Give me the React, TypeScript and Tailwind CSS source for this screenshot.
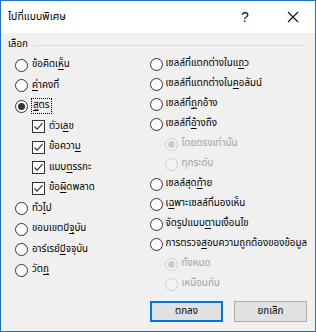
import React from "react";

type Lbl = [string, string, string];

function Radio({ checked = false, disabled = false }: { checked?: boolean; disabled?: boolean }) {
  return (
    <span
      className={
        disabled
          ? "flex w-[13px] h-[13px] shrink-0 items-center justify-center rounded-full border border-[#cccccc] bg-[#f4f4f4]"
          : "flex w-[13px] h-[13px] shrink-0 items-center justify-center rounded-full border border-[#333333] bg-white"
      }
    >
      {checked && (
        <span
          className={
            disabled
              ? "block w-[7px] h-[7px] rounded-full bg-[#cccccc]"
              : "block w-[7px] h-[7px] rounded-full bg-[#333333]"
          }
        />
      )}
    </span>
  );
}

function Check() {
  return (
    <span className="flex w-[13px] h-[13px] shrink-0 items-center justify-center border border-[#333333] bg-white">
      <svg width="11" height="11" viewBox="0 0 11 11">
        <path d="M1.5 5.5 L4.2 8.2 L9.5 2.2" fill="none" stroke="#333333" strokeWidth="1.2" />
      </svg>
    </span>
  );
}

function Label({ l, disabled = false, focus = false }: { l: Lbl; disabled?: boolean; focus?: boolean }) {
  return (
    <span
      className={
        (disabled ? "whitespace-nowrap text-[#a0a0a0] " : "whitespace-nowrap text-black ") +
        (focus ? "outline outline-1 outline-dotted outline-[#000] px-[1px] py-[2px]" : "")
      }
    >
      {l[0]}
      {l[1] && <span className="underline underline-offset-[2px]">{l[1]}</span>}
      {l[2]}
    </span>
  );
}

function LRow({ children }: { children: React.ReactNode }) {
  return <div className="flex h-[20.5px] items-center gap-[4px]">{children}</div>;
}
function RRow({ children, indent = false }: { children: React.ReactNode; indent?: boolean }) {
  return (
    <div className={indent ? "flex h-[20px] items-center gap-[4px] pl-[15px]" : "flex h-[20px] items-center gap-[3px]"}>
      {children}
    </div>
  );
}

export default function App() {
  const font = {
    fontFamily: '"Leelawadee UI", Tahoma, "Noto Sans Thai", "Noto Sans", "DejaVu Sans", sans-serif',
  };
  return (
    <div className="w-[316px] h-[332px] border border-[#1f70c8] flex flex-col text-[9.8px] leading-none" style={font}>
      <div className="h-[32px] bg-white flex items-center pl-[7px] shrink-0">
        <span className="text-black text-[10.5px]">ไปที่แบบพิเศษ</span>
        <span className="ml-auto w-[20px] text-center text-[14px] text-[#111] mr-[32px]" style={{ fontFamily: '"Liberation Sans", sans-serif' }}>?</span>
        <span className="mr-[16px] flex items-center">
          <svg width="12" height="12" viewBox="0 0 12 12">
            <path d="M1 1 L11 11 M11 1 L1 11" stroke="#111" strokeWidth="1.1" />
          </svg>
        </span>
      </div>
      <div className="flex-1 bg-[#f0f0f0] flex flex-col pl-[14px] pr-[8px] pt-[5px] pb-[9px]">
        <div className="flex h-[14px] items-center gap-[6px] -ml-[7px]">
          <span className="text-black">เลือก</span>
          <span className="flex-1 h-px bg-[#dcdcdc]" />
        </div>
        <div className="flex mt-[2px]">
          <div className="w-[137px] flex flex-col pt-[1px]">
            <LRow><Radio /><Label l={["ข้อคิดเ", "ห็", "น"]} /></LRow>
            <LRow><Radio /><Label l={["", "ค่", "าคงที่"]} /></LRow>
            <LRow><Radio checked /><Label focus l={["", "สู", "ตร"]} /></LRow>
            <div className="flex flex-col pl-[17px]">
              <LRow><Check /><Label l={["ตัวเ", "ล", "ข"]} /></LRow>
              <LRow><Check /><Label l={["ข้อควา", "ม", ""]} /></LRow>
              <LRow><Check /><Label l={["แบบ", "ต", "รรกะ"]} /></LRow>
              <LRow><Check /><Label l={["ข้อ", "ผิ", "ดพลาด"]} /></LRow>
            </div>
            <LRow><Radio /><Label l={["ทั่ว", "ไ", "ป"]} /></LRow>
            <LRow><Radio /><Label l={["ขอบเขตปั", "จุ", "บัน"]} /></LRow>
            <LRow><Radio /><Label l={["อาร์เรย์", "ปั", "จจุบัน"]} /></LRow>
            <LRow><Radio /><Label l={["วัต", "ถุ", ""]} /></LRow>
          </div>
          <div className="flex-1 flex flex-col">
            <RRow><Radio /><Label l={["เซลล์ที่แตกต่างในแ", "ถ", "ว"]} /></RRow>
            <RRow><Radio /><Label l={["เซลล์ที่แตกต่างใน", "ค", "อลัมน์"]} /></RRow>
            <RRow><Radio /><Label l={["เซลล์ที่", "ถู", "กอ้าง"]} /></RRow>
            <RRow><Radio /><Label l={["เซลล์ที่", "อ้", "างถึง"]} /></RRow>
            <RRow indent><Radio checked disabled /><Label disabled l={["โดยตรงเท่านั้น", "", ""]} /></RRow>
            <RRow indent><Radio disabled /><Label disabled l={["ทุกระดับ", "", ""]} /></RRow>
            <RRow><Radio /><Label l={["เซลล์สุด", "ท้", "าย"]} /></RRow>
            <RRow><Radio /><Label l={["เ", "ฉ", "พาะเซลล์ที่มองเห็น"]} /></RRow>
            <RRow><Radio /><Label l={["จัดรูปแบบ", "ต", "ามเงื่อนไข"]} /></RRow>
            <RRow><Radio /><Label l={["การตรวจ", "ส", "อบความถูกต้องของข้อมูล"]} /></RRow>
            <RRow indent><Radio checked disabled /><Label disabled l={["ทั้งหมด", "", ""]} /></RRow>
            <RRow indent><Radio disabled /><Label disabled l={["เหมือนกัน", "", ""]} /></RRow>
          </div>
        </div>
        <div className="mt-auto flex justify-end gap-[11px]">
          <button className="w-[73px] h-[21px] border-2 border-[#0078d7] bg-[#e1e1e1] text-black text-[9.8px] flex items-center justify-center">
            ตกลง
          </button>
          <button className="w-[73px] h-[21px] border border-[#adadad] bg-[#e1e1e1] text-black text-[9.8px] flex items-center justify-center">
            ยกเลิก
          </button>
        </div>
      </div>
    </div>
  );
}
